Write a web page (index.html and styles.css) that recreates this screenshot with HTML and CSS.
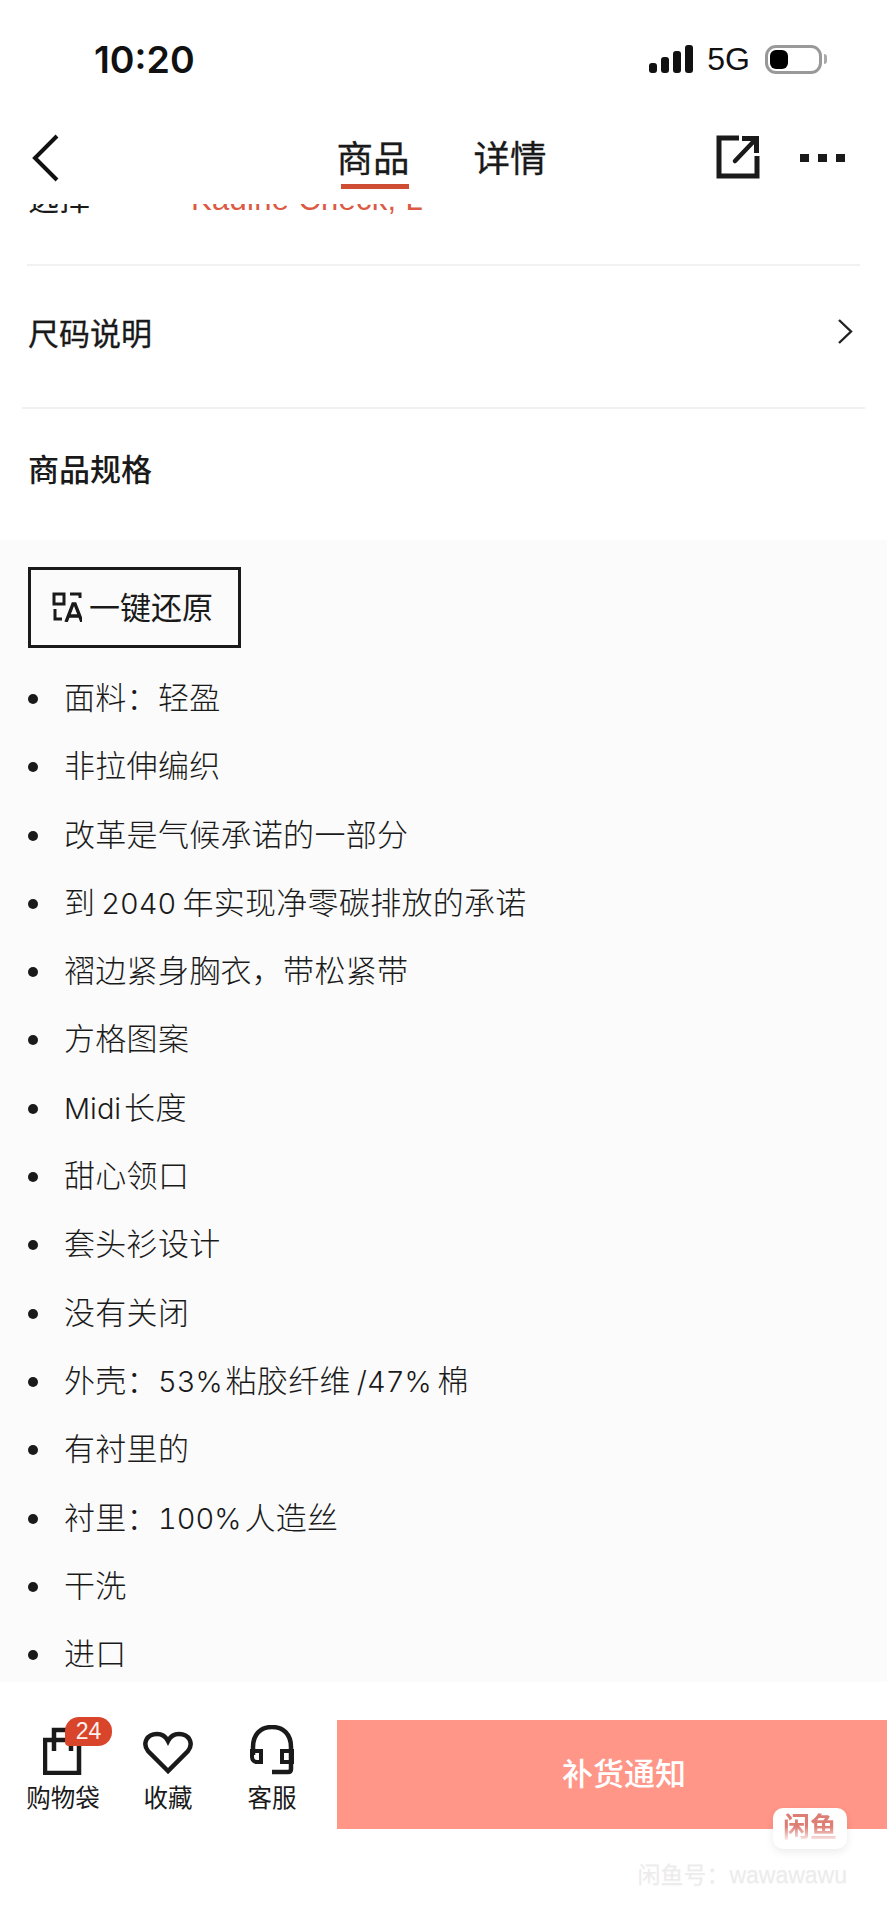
FILE: index.html
```html
<!DOCTYPE html>
<html lang="zh-CN">
<head>
    <meta charset="UTF-8">
    <meta name="viewport" content="width=device-width, initial-scale=1.0">
    <title>商品规格</title>
    <link rel="stylesheet" href="styles.css">
</head>
<body>
    <div class="page">
        <div class="status-bar">
            <span class="clock">10:20</span>
            <div class="status-icons">
                <svg class="signal" width="44" height="28" viewBox="0 0 44 28">
                    <rect x="0" y="18" width="8" height="10" rx="3"/>
                    <rect x="12" y="12" width="8" height="16" rx="3"/>
                    <rect x="24" y="6" width="8" height="22" rx="3"/>
                    <rect x="36" y="0" width="8" height="28" rx="3"/>
                </svg>
                <span class="network">5G</span>
                <div class="battery"><div class="battery-level"></div></div>
                <div class="battery-tip"></div>
            </div>
        </div>

        <div class="nav-bar">
            <svg class="back" width="28" height="48" viewBox="0 0 28 48">
                <path d="M25 2 L3 24 L25 46" fill="none" stroke="#111" stroke-width="4"/>
            </svg>
            <div class="tabs">
                <span class="tab active">商品</span>
                <span class="tab">详情</span>
            </div>
            <div class="nav-actions">
                <svg class="share" width="44" height="44" viewBox="0 0 44 44">
                    <path d="M23 3 H3 V41 H41 V21" fill="none" stroke="#1a1a1a" stroke-width="5"/>
                    <path d="M19 26 L39 5" fill="none" stroke="#1a1a1a" stroke-width="4.5" stroke-linecap="round"/>
                    <path d="M26 1 H43 V18 H38 V6 H26 Z" fill="#1a1a1a"/>
                </svg>
                <div class="more">
                    <span class="dot"></span>
                    <span class="dot"></span>
                    <span class="dot"></span>
                </div>
            </div>
        </div>

        <div class="content">
            <div class="select-row">
                <div class="select-inner">
                    <span class="select-label">选择</span>
                    <span class="select-value">Kadiné Check, L</span>
                </div>
            </div>
            <div class="size-row">
                <span>尺码说明</span>
                <svg width="17" height="27" viewBox="0 0 17 27">
                    <path d="M2 2 L14 13.5 L2 25" fill="none" stroke="#222" stroke-width="2.4"/>
                </svg>
            </div>
            <div class="spec-title">商品规格</div>

            <div class="spec-panel">
                <div class="restore-btn">
                    <svg width="30" height="30" viewBox="0 0 30 30">
                        <rect x="2" y="2" width="10" height="10" fill="none" stroke="#1a1a1a" stroke-width="3"/>
                        <path d="M18 2 H28 V6 M3 17 V27 H10" fill="none" stroke="#1a1a1a" stroke-width="3"/>
                        <path d="M14 30 L21 12 L23 12 L30 30 M16.5 24 H27.5" fill="none" stroke="#1a1a1a" stroke-width="3.4"/>
                    </svg>
                    <span>一键还原</span>
                </div>
                <ul class="spec-list">
                    <li>面料：轻盈</li>
                    <li>非拉伸编织</li>
                    <li>改革是气候承诺的一部分</li>
                    <li>到<span class="latin">2040</span>年实现净零碳排放的承诺</li>
                    <li>褶边紧身胸衣，带松紧带</li>
                    <li>方格图案</li>
                    <li><span class="latin first">Midi</span>长度</li>
                    <li>甜心领口</li>
                    <li>套头衫设计</li>
                    <li>没有关闭</li>
                    <li>外壳：<span class="latin first">53%</span>粘胶纤维<span class="latin">/47%</span>棉</li>
                    <li>有衬里的</li>
                    <li>衬里：<span class="latin first">100%</span>人造丝</li>
                    <li>干洗</li>
                    <li>进口</li>
                </ul>
            </div>
        </div>

        <div class="bottom-bar">
            <div class="bottom-icons">
                <div class="bottom-item bag-item">
                    <svg width="40" height="50" viewBox="0 0 40 50">
                        <path d="M2 15 H36 V48 H2 Z" fill="none" stroke="#1a1a1a" stroke-width="4.5"/>
                        <path d="M11 26 V5 H28 V26" fill="none" stroke="#1a1a1a" stroke-width="4.5"/>
                    </svg>
                    <span class="badge">24</span>
                    <span>购物袋</span>
                </div>
                <div class="bottom-item">
                    <svg width="50" height="50" viewBox="0 0 50 50">
                        <path d="M25 46 L5 26 C-1 18 4 9 14 9 C19 9 23 12 25 16 C27 12 31 9 36 9 C46 9 51 18 45 26 Z" fill="none" stroke="#1a1a1a" stroke-width="4.5"/>
                    </svg>
                    <span>收藏</span>
                </div>
                <div class="bottom-item">
                    <svg width="46" height="50" viewBox="0 0 46 50">
                        <path d="M4 30 V22 C4 9 12 2 23 2 C34 2 42 9 42 22 V44 C42 46 41 47 39 47 H23" fill="none" stroke="#1a1a1a" stroke-width="4.5"/>
                        <path d="M3 26 H12 V37 H8 C5 37 3 35 3 32 Z M43 26 H33 V37 H43 Z" fill="none" stroke="#1a1a1a" stroke-width="4"/>
                    </svg>
                    <span>客服</span>
                </div>
            </div>
            <div class="notify-btn">补货通知</div>
        </div>

        <div class="watermark">
            <div class="wm-logo"><span>闲鱼</span></div>
            <div class="wm-text">闲鱼号：wawawawu</div>
        </div>
    </div>
</body>
</html>
```

FILE: styles.css
```css
* {
    box-sizing: border-box;
}
body {
    margin: 0;
    padding: 0;
    background-color: #fff;
    font-family: "Liberation Sans", "Noto Sans CJK SC", sans-serif;
    color: #1a1a1a;
}
.page {
    position: relative;
    width: 887px;
    height: 1920px;
    display: flex;
    flex-direction: column;
    overflow: hidden;
    background-color: #fff;
}

/* status bar */
.status-bar {
    height: 118px;
    flex-shrink: 0;
    display: flex;
    justify-content: space-between;
    align-items: center;
    padding: 0 60px 0 94px;
}
.clock {
    font-family: Inter, sans-serif;
    font-size: 37.5px;
    font-weight: 600;
    color: #111;
}
.status-icons {
    display: flex;
    align-items: center;
}
.signal {
    fill: #111;
}
.network {
    margin: 0 15px 0 14px;
    font-size: 32px;
    color: #111;
}
.battery {
    width: 57px;
    height: 29px;
    padding: 2px;
    border: 3px solid #999;
    border-radius: 11px;
}
.battery-level {
    width: 18px;
    height: 19px;
    background-color: #000;
    border-radius: 6px;
}
.battery-tip {
    width: 3px;
    height: 10px;
    margin-left: 2px;
    background-color: #aaa;
    border-radius: 0 3px 3px 0;
}

/* nav bar */
.nav-bar {
    height: 86px;
    flex-shrink: 0;
    display: grid;
    grid-template-columns: 1fr auto 1fr;
    align-items: center;
    padding: 0 42px 6px 32px;
    background-color: #fff;
}
.tabs {
    align-self: start;
    display: flex;
    gap: 64px;
    margin: 20px 0 0 6px;
}
.tab {
    display: block;
    font-size: 36.5px;
    line-height: 44px;
    -webkit-text-stroke: 0.3px #1a1a1a;
    color: #1a1a1a;
}
.tab.active::after {
    content: "";
    display: block;
    height: 5px;
    margin: 2px 1px 0 4px;
    background-color: #cf4d33;
}
.nav-actions {
    display: flex;
    justify-content: flex-end;
    align-items: center;
    gap: 40px;
}
.share {
    margin-bottom: 2px;
}
.more {
    display: flex;
    gap: 9px;
}
.dot {
    width: 9px;
    height: 8px;
    background-color: #1a1a1a;
}

/* content */
.content {
    flex: 1;
    min-height: 0;
    overflow: hidden;
    display: flex;
    flex-direction: column;
}
.select-row {
    height: 62px;
    flex-shrink: 0;
    margin: 0 27px;
    border-bottom: 2px solid #f1f1f1;
    overflow: hidden;
}
.select-inner {
    display: flex;
    gap: 101px;
    margin-top: -27px;
    padding-left: 1px;
    font-size: 31px;
    line-height: 46px;
}
.select-value {
    color: #dc5a44;
    letter-spacing: 0.3px;
}
.size-row {
    height: 143px;
    flex-shrink: 0;
    margin: 0 22px;
    padding: 0 11px 10px 6px;
    display: flex;
    justify-content: space-between;
    align-items: center;
    border-bottom: 2px solid #f1f1f1;
    font-size: 31px;
    -webkit-text-stroke: 0.3px #1a1a1a;
}
.spec-title {
    height: 131px;
    flex-shrink: 0;
    padding: 40px 0 0 28px;
    font-size: 31px;
    font-weight: 500;
    line-height: 44px;
}
.spec-panel {
    flex: 1;
    background-color: #fbfbfb;
    padding: 27px 28px 0;
}
.restore-btn {
    display: inline-flex;
    align-items: center;
    gap: 7px;
    width: 213px;
    height: 81px;
    padding: 0 0 5px 21px;
    border: 3px solid #1a1a1a;
    font-size: 31px;
}
.restore-btn svg {
    margin-top: 3px;
}
.spec-list {
    list-style: none;
    margin: 17px 0 0;
    padding: 0;
}
.spec-list li {
    position: relative;
    height: 68.3px;
    padding-left: 36px;
    font-size: 31px;
    line-height: 68px;
    font-weight: 300;
    letter-spacing: 0.3px;
    color: #1a1a1a;
}
.spec-list li::before {
    content: "";
    position: absolute;
    left: 0;
    top: 29px;
    width: 10px;
    height: 10px;
    background-color: #1a1a1a;
    border-radius: 50%;
}
.latin {
    margin: 0 6px;
    font-family: Inter, sans-serif;
    font-size: 29px;
    line-height: 1;
    font-weight: 300;
    font-variant-numeric: tabular-nums;
    letter-spacing: 0;
}
.latin.first {
    margin: 0 3px 0 0;
}

/* bottom bar */
.bottom-bar {
    height: 238px;
    flex-shrink: 0;
    display: flex;
    align-items: flex-start;
    padding: 38px 0 0 30px;
    background-color: #fff;
}
.bottom-icons {
    width: 307px;
    display: flex;
    gap: 40px;
}
.bottom-item {
    position: relative;
    width: 64px;
    display: flex;
    flex-direction: column;
    align-items: center;
    font-size: 24.5px;
    white-space: nowrap;
}
.bottom-item svg {
    margin: 5px 0 4px;
}
.bag-item {
    width: 66px;
}
.bag-item svg {
    align-self: flex-start;
    margin-left: 13px;
}
.badge {
    position: absolute;
    left: 35px;
    top: -3px;
    width: 47px;
    height: 29px;
    background-color: #d9452b;
    border-radius: 14px 14px 14px 4px;
    color: #fdf1ee;
    font-size: 23px;
    line-height: 29px;
    text-align: center;
}
.notify-btn {
    flex: 1;
    height: 109px;
    padding-left: 24px;
    background-color: #ff9688;
    color: #fff;
    font-size: 31px;
    font-weight: 500;
    line-height: 109px;
    text-align: center;
}

/* watermark on top of the screenshot */
.watermark {
    position: absolute;
    right: 40px;
    bottom: 30px;
    display: flex;
    flex-direction: column;
    align-items: flex-end;
    gap: 7px;
}
.wm-logo {
    width: 74px;
    height: 41px;
    background-color: #fff;
    border-radius: 10px;
    box-shadow: 0 3px 8px rgba(0, 0, 0, 0.08);
    text-align: center;
    font-size: 27px;
    font-weight: 700;
    line-height: 40px;
}
.wm-logo span {
    background: linear-gradient(#dd7d74 45%, #f5dcd9 85%);
    -webkit-background-clip: text;
    background-clip: text;
    color: transparent;
}
.wm-text {
    font-size: 23px;
    color: #ececec;
    text-shadow: 0 1px 1px rgba(0, 0, 0, 0.04);
}
```
